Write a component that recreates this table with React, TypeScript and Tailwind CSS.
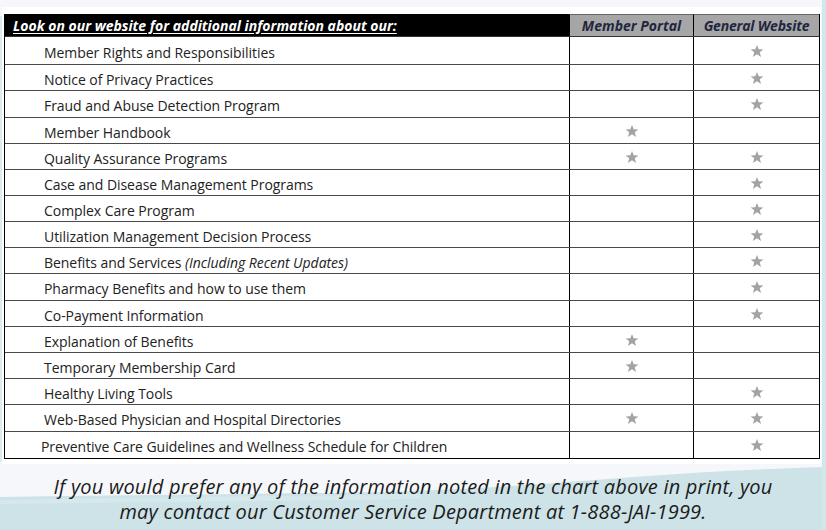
import React from 'react';

type Row = { label: React.ReactNode; portal: boolean; site: boolean; h: string; pl?: string };

const rows: Row[] = [
  { label: 'Member Rights and Responsibilities', portal: false, site: true, h: 'h-[28px]' },
  { label: 'Notice of Privacy Practices', portal: false, site: true, h: 'h-[26px]' },
  { label: 'Fraud and Abuse Detection Program', portal: false, site: true, h: 'h-[27px]' },
  { label: 'Member Handbook', portal: true, site: false, h: 'h-[26px]' },
  { label: 'Quality Assurance Programs', portal: true, site: true, h: 'h-[26px]' },
  { label: 'Case and Disease Management Programs', portal: false, site: true, h: 'h-[26px]' },
  { label: 'Complex Care Program', portal: false, site: true, h: 'h-[26px]' },
  { label: 'Utilization Management Decision Process', portal: false, site: true, h: 'h-[26px]' },
  {
    label: (
      <>
        Benefits and Services <span className="italic">(Including Recent Updates)</span>
      </>
    ),
    portal: false,
    site: true,
    h: 'h-[26px]',
  },
  { label: 'Pharmacy Benefits and how to use them', portal: false, site: true, h: 'h-[27px]' },
  { label: 'Co-Payment Information', portal: false, site: true, h: 'h-[26px]' },
  { label: 'Explanation of Benefits', portal: true, site: false, h: 'h-[26px]' },
  { label: 'Temporary Membership Card', portal: true, site: false, h: 'h-[26px]' },
  { label: 'Healthy Living Tools', portal: false, site: true, h: 'h-[26px]' },
  { label: 'Web-Based Physician and Hospital Directories', portal: true, site: true, h: 'h-[27px]' },
  {
    label: 'Preventive Care Guidelines and Wellness Schedule for Children',
    portal: false,
    site: true,
    h: 'h-[26px]',
    pl: 'pl-[36px]',
  },
];

const Star = () => (
  <svg width="14" height="14" viewBox="0 0 24 24" className="fill-[#a3a3a3]">
    <polygon points="12,1.5 14.9,9 23,9.3 16.7,14.3 18.9,22.3 12,17.7 5.1,22.3 7.3,14.3 1,9.3 9.1,9" />
  </svg>
);

const Backdrop = () => (
  <svg className="absolute inset-0" width="826" height="530" viewBox="0 0 826 530">
    <path
      d="M0,497 C120,495 260,494 380,492 C470,490 540,484 620,478 C700,472 760,469 826,467 L826,530 L0,530 Z"
      fill="#cde3e7"
    />
    <path d="M0,500 C150,497 300,496 420,494 L420,499 C300,501 150,502 0,504 Z" fill="#d8eaec" opacity="0.7" />
    <rect x="822" y="0" width="4" height="530" fill="#d3e6ea" />
    <rect x="0" y="16" width="2" height="446" fill="#dcebee" />
  </svg>
);

export default function App() {
  return (
    <div className="relative w-[826px] h-[530px] overflow-hidden bg-[#f6f7fb]">
      <Backdrop />
      <div className="relative flex flex-col pt-[7px]">
        <div className="ml-[2px] w-[819px] bg-white pt-[7px] pb-[5px] pl-[2px]">
          <div className="w-[816px] border-l-[1.5px] border-r-[1.5px] border-b-[1.5px] border-black font-['Open_Sans',sans-serif]">
            <div className="grid h-[23px] grid-cols-[564px_124px_1fr] border-b-[1.5px] border-[#333]">
              <div className="flex items-center bg-black pl-[8px]">
                <span className="text-[14px] font-bold italic text-white underline underline-offset-[2px]">
                  Look on our website for additional information about our:
                </span>
              </div>
              <div className="flex items-center justify-center border-l-[1.5px] border-black bg-[#a6a6a6] border-t border-t-[#666]">
                <span className="text-[14px] font-bold italic text-[#1f2740]">Member Portal</span>
              </div>
              <div className="flex items-center justify-center border-l-[1.5px] border-black bg-[#a6a6a6] border-t border-t-[#666]">
                <span className="text-[14px] font-bold italic text-[#1f2740] tracking-[-0.2px]">General Website</span>
              </div>
            </div>
            {rows.map((r, i) => (
              <div
                key={i}
                className={`grid grid-cols-[564px_124px_1fr] ${r.h} ${
                  i < rows.length - 1 ? 'border-b-[1.5px] border-[#4a4a4a]' : ''
                }`}
              >
                <div className={`flex items-center pt-[3px] ${r.pl ?? 'pl-[39px]'} text-[14px] text-[#222] tracking-[-0.05px]`}>
                  <span>{r.label}</span>
                </div>
                <div className="flex items-center justify-center border-l-[1.5px] border-black">
                  {r.portal && <Star />}
                </div>
                <div className="flex items-center justify-center border-l-[1.5px] border-black">
                  {r.site && <Star />}
                </div>
              </div>
            ))}
          </div>
        </div>
        <p className="mt-[10px] text-center font-['Open_Sans',sans-serif] text-[20px] italic leading-[25px] tracking-[0.2px] text-[#1b1b1b]">
          If you would prefer any of the information noted in the chart above in print, you
          <br />
          may contact our Customer Service Department at 1-888-JAI-1999.
        </p>
      </div>
    </div>
  );
}
